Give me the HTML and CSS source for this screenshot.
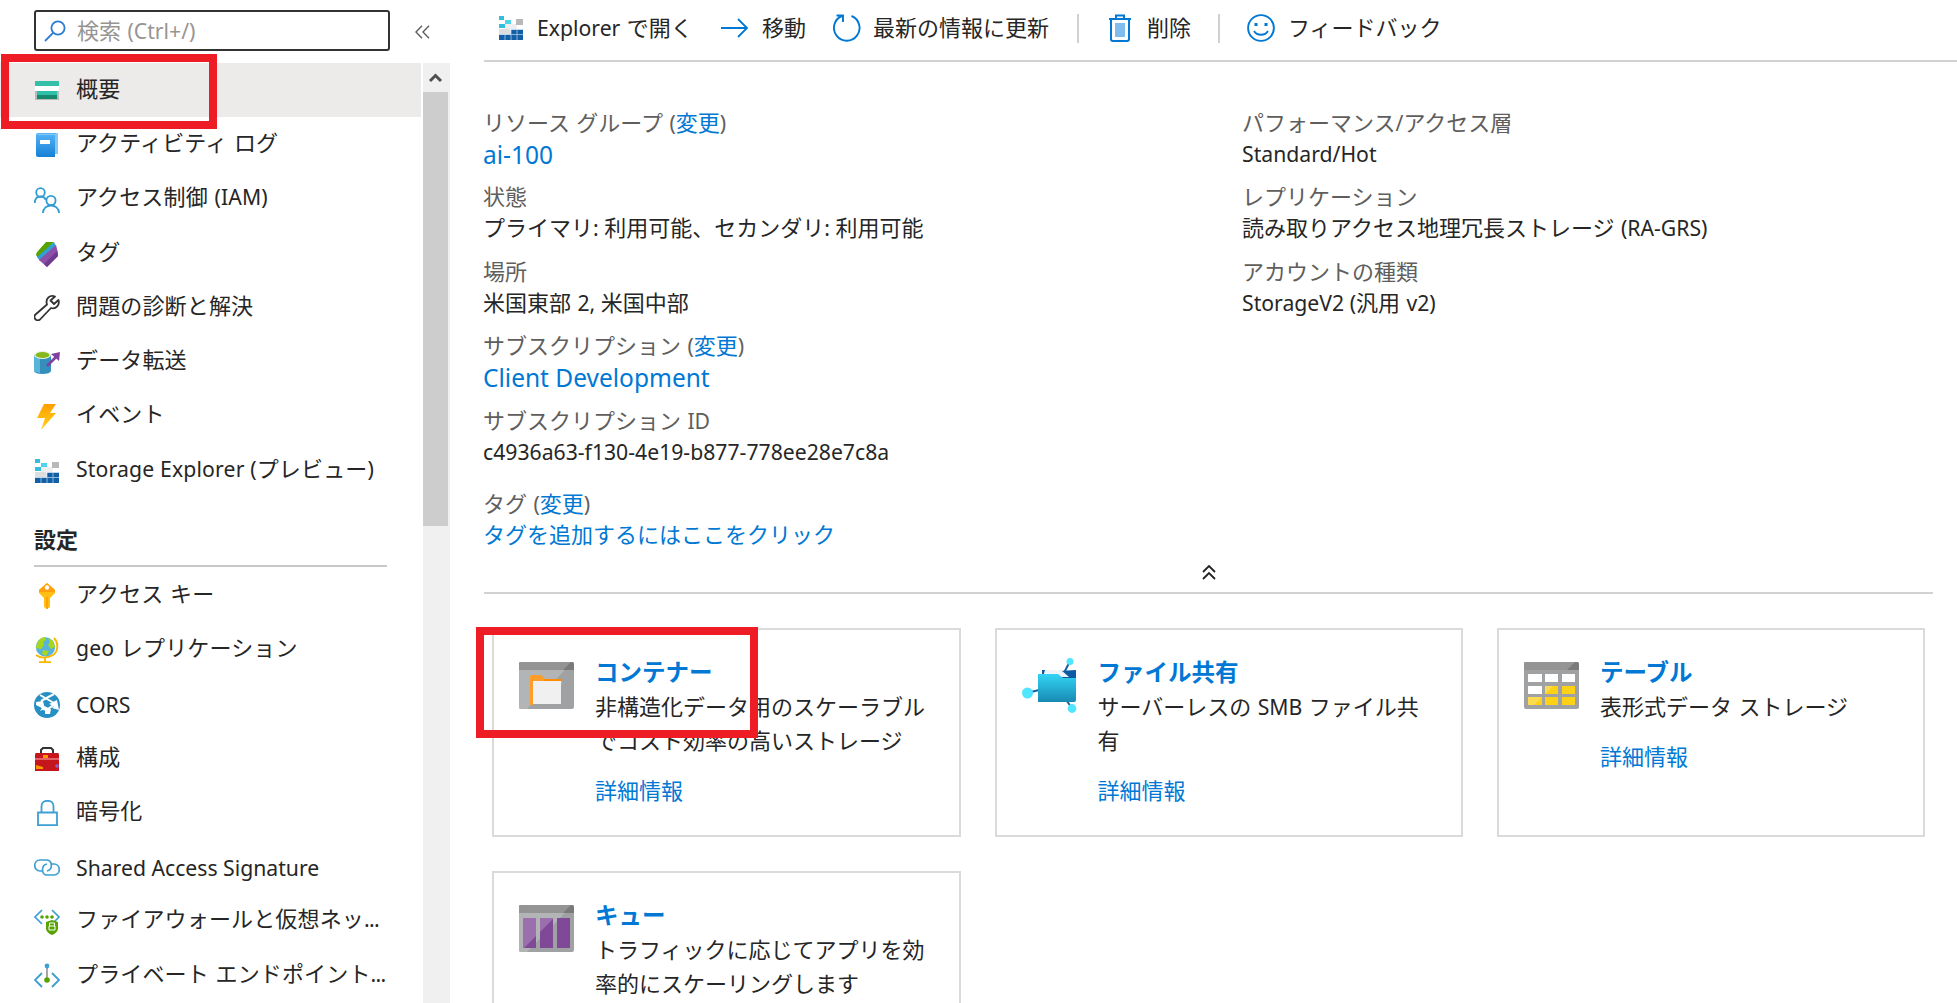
FILE: index.html
```html
<!DOCTYPE html>
<html lang="ja">
<head>
<meta charset="utf-8">
<title>ストレージ アカウント</title>
<link rel="stylesheet" href="styles.css">
</head>
<body>
<svg width="0" height="0" class="defs">
  <defs>
    <symbol id="explorer" viewBox="0 0 24 24">
      <path d="M6 4h6v4h6v5H6z" fill="#f0f0f0"/>
      <path d="M0 0h5v4H0zM0 8h6v4H0z" fill="#32bedd"/><path d="M6 4h6v4H6z" fill="#50d4ee"/>
      <path d="M17 3h7v6h-7z" fill="#b8b8b8"/><path d="M6 9h5v4H6zM12 9h5v4h-5z" fill="#eee"/>
      <path d="M0 13h11v5H0z" fill="#dedede"/><path d="M12 14h12v10H0v-5h12z" fill="#135fa5"/>
      <path d="M0 18.5h24M12 13.5h12M6 19v5M12 14v10M18 14v10" stroke="#a9cbea" stroke-width=".8"/>
    </symbol>
    <linearGradient id="book" x2="0" y2="1"><stop stop-color="#55b4f8"/><stop offset="1" stop-color="#1580d5"/></linearGradient>
    <linearGradient id="folder" x2="0" y2="1"><stop stop-color="#32d4f5"/><stop offset="1" stop-color="#198ab3"/></linearGradient>
    <linearGradient id="bolt" x2="0" y2="1"><stop stop-color="#ff9f00"/><stop offset="1" stop-color="#ffd21c"/></linearGradient>
  </defs>
</svg>
<div class="app">
  <aside class="side">
    <div class="search-row">
      <div class="search">
        <svg width="22" height="22" viewBox="0 0 22 22" fill="none" stroke="#2b7cd3" stroke-width="1.8"><circle cx="14" cy="8" r="6.6"/><path d="M9.3 12.7L1 21"/></svg>
        <span>検索 <span class="en">(Ctrl+/)</span></span>
      </div>
      <svg class="collapse" width="15" height="14" viewBox="0 0 15 14" fill="none" stroke="#605e5c" stroke-width="1.4"><path d="M7 .7L1 7l6 6.3M14 .7L8 7l6 6.3"/></svg>
    </div>
    <div class="side-body">
      <nav class="menu">
        <div class="item active"><svg width="26" height="26" viewBox="0 0 26 26"><path d="M1 7h24v13H1z" fill="#e4e4e4"/><path d="M1 3h24v5H1z" fill="#35bfa9"/><path d="M1 8h24v5H1z" fill="#fff"/><path d="M1 13h24v9H1z" fill="#b8bab9"/><path d="M3 13h20v4H3z" fill="#2fc0a9"/><path d="M3 17h20v4H3z" fill="#15896f"/></svg><span>概要</span></div>
        <div class="item"><svg width="26" height="26" viewBox="0 0 26 26"><path d="M4 1h19q1 0 1 1v20H4z" fill="#83c8f6"/><path d="M4 3h17v22H4q-2 0-2-2V3q0-2 2-2h18v1H4z" fill="url(#book)"/><path d="M6 8h10v4H6z" fill="#fff"/></svg><span>アクティビティ ログ</span></div>
        <div class="item"><svg width="26" height="26" viewBox="0 0 26 26" fill="none" stroke="#309cd3" stroke-width="1.8"><circle cx="6.5" cy="5.5" r="4.3"/><path d="M.8 16c0-8 9-8 11-3"/><circle cx="17" cy="13.500" r="4.6"/><path d="M9 26c0-10 16-10 16 0"/></svg><span>アクセス制御 <span class="en">(IAM)</span></span></div>
        <div class="item"><svg width="26" height="26" viewBox="0 0 26 26"><path d="M12 1h8L4 17l-2-3q0-2 2-4z" fill="#57a300"/><path d="M20 1l2 4L6 20l-3-4z" fill="#32a0d0"/><path d="M22 4l2 8v3L13 26 5 19z" fill="#8e4fa9"/><path d="M24 15L13 26l-3-3 13-13z" fill="#6f3b91"/></svg><span>タグ</span></div>
        <div class="item"><svg width="26" height="26" viewBox="0 0 26 26" fill="none" stroke="#333" stroke-width="1.8" stroke-linejoin="round"><path d="M21 1.500c-5-2-10 2-8 8L1.500 19.500c-3 3 1 7.500 4.500 5L17 13c5 1.500 9-3 7.500-8l-4.500 4-3.500-3.500z"/></svg><span>問題の診断と解決</span></div>
        <div class="item"><svg width="26" height="26" viewBox="0 0 26 26"><path d="M0 5h17v16q-1 3-8.500 3T0 21z" fill="#348fbd"/><path d="M0 6h6v17q-6-1-6-2z" fill="#59b4d9"/><ellipse cx="8.500" cy="5" rx="8.500" ry="4" fill="#e5f0e0"/><ellipse cx="8.500" cy="5" rx="7" ry="3" fill="#86b81b"/><path d="M13 16l9-9" stroke="#8040a0" stroke-width="2.600"/><path d="M17 4l9-2-1 9z" fill="#8040a0"/></svg><span>データ転送</span></div>
        <div class="item"><svg width="26" height="26" viewBox="0 0 26 26"><path d="M10 0h12l-6 9h6L7 26l4-12H3z" fill="url(#bolt)"/></svg><span>イベント</span></div>
        <div class="item"><svg width="26" height="26" viewBox="-1 -1 26 26"><use href="#explorer" width="24" height="24"/></svg><span><span class="en">Storage Explorer (</span>プレビュー<span class="en">)</span></span></div>
        <h2 class="group">設定</h2>
        <div class="item"><svg width="26" height="26" viewBox="0 0 26 26"><path d="M13 0l8 7v3l-5 5v9l-3 2-3-2v-9L5 10V7z" fill="#ffbe12"/><path d="M13 0L5 7v2h16V7z" fill="#ff9f0f"/><circle cx="13" cy="4.500" r="2.200" fill="#fff"/><path d="M13 14v12" stroke="#ff9b00" stroke-width="1.500"/></svg><span>アクセス キー</span></div>
        <div class="item"><svg width="26" height="26" viewBox="0 0 26 26"><circle cx="11.500" cy="10" r="9.700" fill="#59b4d9"/><path d="M3 6q3-6 8-6l1 3-3 2 1 3-3 4-5-1zM14 1l5 3 2 6-4 2-3-4 2-3zM9 13l6 1-3 5-4-2z" fill="#a6d61e"/><path d="M20 1c5 5 4 14-1 17s-12 4-17 0M11 21v4M5 25.300h12" fill="none" stroke="#fab700" stroke-width="1.900"/></svg><span><span class="en">geo</span> レプリケーション</span></div>
        <div class="item"><svg width="26" height="26" viewBox="0 0 26 26"><circle cx="13" cy="13" r="13" fill="#268fc4"/><path d="M6 3l14 8M20 2L7 9M4 11l7 7M22 11l-8 6-4-2" stroke="#fff" stroke-width="2" fill="none"/><path d="M2 10l7-1 2 8-5 2 2-3-6-3zM23 8l2 10-7-2 2-2-5-2zM11 17h6l-1 5h-5z" fill="#fff"/></svg><span class="en low">CORS</span></div>
        <div class="item"><svg width="26" height="26" viewBox="0 0 26 26"><path d="M7 8V4l2-2h8l2 2v4" stroke="#333" stroke-width="2" fill="none"/><path d="M2 7h22q1 0 1 2v16H1V9q0-2 1-2z" fill="#c4161c"/><path d="M1 13h24" stroke="#f07880" stroke-width="1.500"/><path d="M9 9h5v3H9zM2 19l7 2v2H2z" fill="#ff9500"/><circle cx="23" cy="20" r="1.800" fill="#8e62d5"/></svg><span>構成</span></div>
        <div class="item"><svg width="26" height="26" viewBox="0 0 26 26" fill="none" stroke="#3d9fd3" stroke-width="1.800"><path d="M4 12.500h19v12.600H4zM7.500 12V6c0-7 12-7 12 0v6"/></svg><span>暗号化</span></div>
        <div class="item"><svg width="26" height="26" viewBox="0 0 26 26" fill="none" stroke="#3d9fd3" stroke-width="1.700"><path d="M8 16H6C-1 16-1 5 6 5h6c7 0 7 10 1 11"/><path d="M17 9h3c7 0 7 11 0 11h-7c-6 0-6-10 0-11"/></svg><span class="en low">Shared Access Signature</span></div>
        <div class="item"><svg width="26" height="26" viewBox="0 0 26 26" fill="none"><path d="M8 1L1 8l7 7M18 1l7 7-5 5" stroke="#3d9fd3" stroke-width="1.700"/><g fill="#57a300"><circle cx="8" cy="8" r="1.800"/><circle cx="13" cy="8" r="1.800"/><circle cx="18" cy="8" r="1.800"/><path d="M12 13l6-2 6 2v7q-1 4-6 6-5-2-6-6z"/></g><path d="M15.500 17v-3h5v3M15 17h6v4h-6z" stroke="#fff" stroke-width="1"/></svg><span>ファイアウォールと仮想ネッ<span class="en dots">...</span></span></div>
        <div class="item"><svg width="26" height="26" viewBox="0 0 26 26" fill="none"><path d="M8 10l-7 7 7 7M18 10l7 7-7 7" stroke="#3d9fd3" stroke-width="1.900"/><path d="M13 3v14" stroke="#777" stroke-width="1.300"/><circle cx="13" cy="3" r="2.400" fill="#3d9fd3"/><circle cx="13" cy="17" r="2.800" fill="#57a300"/></svg><span>プライベート エンドポイント<span class="en dots">...</span></span></div>
      </nav>
      <div class="scrollbar">
        <svg width="26" height="29" viewBox="0 0 26 29"><path d="M7 18l5.500-5.500L18 18" fill="none" stroke="#505050" stroke-width="3"/></svg>
        <div class="thumb"></div>
      </div>
    </div>
    <div class="mark mark-menu"></div>
  </aside>

  <main class="main">
    <div class="toolbar">
      <div class="cmd c1"><svg width="24" height="24"><use href="#explorer" width="24" height="24"/></svg><span><span class="en">Explorer</span> で開く</span></div>
      <div class="cmd c2"><svg width="28" height="20" viewBox="0 0 28 20" fill="none" stroke="#0078d4" stroke-width="1.800"><path d="M0 10h26M17 1l9 9-9 9"/></svg><span>移動</span></div>
      <div class="cmd c3"><svg width="28" height="28" viewBox="0 0 28 28" fill="none" stroke="#0078d4" stroke-width="1.900"><path d="M18.500 2A12.800 12.800 0 1 1 9 2M3.500 1.500H10v6.500"/></svg><span>最新の情報に更新</span></div>
      <div class="cmd c4"><svg width="22" height="28" viewBox="0 0 22 28" fill="none" stroke="#0078d4" stroke-width="2"><path d="M0 5h22M7 4V1.500h8V4M2 5v20q0 2 2 2h14q2 0 2-2V5"/><path d="M6 9h10v14H6z" fill="#80bcec" stroke="none"/></svg><span>削除</span></div>
      <div class="cmd c5"><svg width="28" height="28" viewBox="0 0 28 28" fill="none" stroke="#0078d4" stroke-width="1.900"><circle cx="14" cy="14" r="12.900"/><path d="M7 17c3 5 11 5 14 0"/><path d="M7.500 10.500h3M17.500 10.500h3" stroke-width="3"/></svg><span>フィードバック</span></div>
    </div>

    <section class="details">
      <dl class="col">
        <div class="prop"><dt>リソース グループ <span class="en">(</span><a>変更</a><span class="en">)</span></dt><dd class="big"><a>ai-100</a></dd></div>
        <div class="prop"><dt>状態</dt><dd>プライマリ<span class="en">: </span>利用可能、セカンダリ<span class="en">: </span>利用可能</dd></div>
        <div class="prop"><dt>場所</dt><dd>米国東部 <span class="en">2, </span>米国中部</dd></div>
        <div class="prop"><dt>サブスクリプション <span class="en">(</span><a>変更</a><span class="en">)</span></dt><dd class="big"><a>Client Development</a></dd></div>
        <div class="prop"><dt>サブスクリプション <span class="en">ID</span></dt><dd><span class="en">c4936a63-f130-4e19-b877-778ee28e7c8a</span></dd></div>
        <div class="prop tags"><dt>タグ <span class="en">(</span><a>変更</a><span class="en">)</span></dt><dd><a>タグを追加するにはここをクリック</a></dd></div>
      </dl>
      <dl class="col">
        <div class="prop"><dt>パフォーマンス<span class="en">/</span>アクセス層</dt><dd><span class="en">Standard/Hot</span></dd></div>
        <div class="prop"><dt>レプリケーション</dt><dd>読み取りアクセス地理冗長ストレージ <span class="en">(RA-GRS)</span></dd></div>
        <div class="prop"><dt>アカウントの種類</dt><dd><span class="en">StorageV2 (</span>汎用 <span class="en">v2)</span></dd></div>
      </dl>
    </section>
    <div class="fold"><svg width="14" height="15" viewBox="0 0 14 15" fill="none" stroke="#222" stroke-width="1.800"><path d="M1 7l6-6 6 6M1 14l6-6 6 6"/></svg></div>

    <section class="cards">
      <article class="card">
        <svg width="55" height="55" viewBox="0 0 55 55"><rect y="4" width="55" height="47" rx="2" fill="#a0a1a2"/><path d="M0 12h46L8 51H2q-2 0-2-2z" fill="#b3b4b5"/><path d="M0 12V6q0-2 2-2h51q2 0 2 2v6z" fill="#7a7a7a"/><path d="M0 12V6q0-2 2-2h50l-8 8z" fill="#949494"/><path d="M11 47V19q0-2 2-2h9l4 4h15q2 0 2 2v4H14v20z" fill="#ff9d2b"/><path d="M14 23h28v23H14z" fill="#f0f0f0"/><path d="M26 21h17v2H24z" fill="#ff8c00"/></svg>
        <div class="text"><h3>コンテナー</h3><p>非構造化データ用のスケーラブル<br>でコスト効率の高いストレージ</p><a>詳細情報</a></div>
        <div class="mark mark-card"></div>
      </article>
      <article class="card">
        <svg width="55" height="55" viewBox="0 0 55 55"><path d="M5 35l12-3M42 15l6-12M44 42l6 8" stroke="#1560a0" stroke-width="2"/><path d="M20 12h14l3 1 17-1v12H20z" fill="#0c5aa5"/><path d="M23 12h16l8 7H21z" fill="#eef4fa"/><path d="M16 16h20l5 4h13v22q0 2-2 2H16z" fill="url(#folder)"/><g fill="#50e6ff"><circle cx="5.500" cy="35" r="5.500"/><circle cx="48" cy="3.500" r="3.500"/><circle cx="50" cy="50.500" r="4.400"/></g></svg>
        <div class="text"><h3>ファイル共有</h3><p>サーバーレスの <span class="en">SMB</span> ファイル共<br>有</p><a>詳細情報</a></div>
      </article>
      <article class="card">
        <svg width="55" height="55" viewBox="0 0 55 55"><rect y="4" width="55" height="47" rx="2" fill="#a0a1a2"/><path d="M0 12V6q0-2 2-2h51q2 0 2 2v6z" fill="#7a7a7a"/><path d="M0 12V6q0-2 2-2h49l-8 8z" fill="#949494"/><path d="M4 16h14v8H4zM21 16h13v8H21zM38 16h13v8H38zM4 28h14v8H4z" fill="#fff"/><path d="M21 28h13v8H21zM38 28h13v8H38zM4 39h14v8H4zM21 39h13v8H21zM38 39h13v8H38z" fill="#fcd116"/><path d="M21 28h8l-8 8zM4 39h14l-8 8H4z" fill="#fddb50"/></svg>
        <div class="text"><h3>テーブル</h3><p>表形式データ ストレージ</p><a>詳細情報</a></div>
      </article>
      <article class="card">
        <svg width="55" height="55" viewBox="0 0 55 55"><rect y="4" width="55" height="47" rx="2" fill="#a0a1a2"/><path d="M0 12h46L8 51H2q-2 0-2-2z" fill="#b3b4b5"/><path d="M0 12V6q0-2 2-2h51q2 0 2 2v6z" fill="#7a7a7a"/><path d="M0 12V6q0-2 2-2h50l-8 8z" fill="#949494"/><path d="M4 17h13v30H4zM21 17h13v30H21zM38 17h13v30H38z" fill="#804998"/><path d="M4 17h13v18L5 47H4zM21 17h13v1L21 31z" fill="#9b6fae"/></svg>
        <div class="text"><h3>キュー</h3><p>トラフィックに応じてアプリを効<br>率的にスケーリングします</p></div>
      </article>
    </section>
  </main>
</div>
</body>
</html>
```
FILE: styles.css
```css
* { box-sizing: border-box; }
body {
  margin: 0;
  background: #fff;
  color: #262626;
  font: 22px/31px "Noto Sans CJK JP", sans-serif;
  word-spacing: 1.5px;
  overflow: hidden;
}
.defs { position: absolute; }
h2, h3, p, dl, dd, dt { margin: 0; font-weight: 400; }
a { color: #0078d4; }
svg { display: block; flex: none; }
.en {
  font-family: "Noto Sans", sans-serif;
  font-size: 21.200px;
  line-height: 1;
  word-spacing: 0;
}

.app { display: flex; height: 1003px; overflow: hidden; white-space: nowrap; }

/* side menu */
.side {
  position: relative;
  flex: none;
  width: 450px;
  display: flex;
  flex-direction: column;
}
.search-row {
  display: flex;
  align-items: center;
  gap: 25px;
  height: 63px;
  padding: 0 0 2px 34px;
}
.search {
  display: flex;
  align-items: center;
  gap: 11px;
  width: 356px;
  height: 41px;
  padding-left: 8px;
  border: 2px solid #333;
  border-radius: 3px;
  color: #979593;
}
.search > span { padding-bottom: 3px; }
.collapse { margin-top: 2px; }
.side-body { display: flex; flex: 1; min-height: 0; }
.menu { width: 421px; overflow: hidden; }
.item {
  display: flex;
  align-items: center;
  gap: 16px;
  height: 54.300px;
  padding-left: 34px;
}
.item > svg { margin-top: 2px; }
.item > span { padding-bottom: 6px; letter-spacing: .150px; }
.item > .en { padding: 2px 0 0; letter-spacing: 0; }
.item .dots { letter-spacing: -.700px; }
.item.active { background: #edebe9; }
.group {
  height: 70px;
  margin: 0 34px .600px;
  padding-top: 26px;
  width: 353px;
  border-bottom: 2px solid #c8c8c8;
  font-size: 22px;
  font-weight: 700;
}
.scrollbar { width: 27px; margin-left: 2px; background: #f0f0f0; }
.thumb { width: 25px; height: 434px; background: #cdcdcd; }

/* highlight frames */
.mark { position: absolute; border: 8px solid #ee1c25; }
.mark-menu { left: 1px; top: 54px; width: 216px; height: 75px; }
.mark-card { left: -18px; top: -3px; width: 282px; height: 111px; }

/* content */
.main { flex: 1; min-width: 0; padding-left: 34px; overflow: hidden; }
.toolbar {
  display: flex;
  align-items: center;
  height: 62px;
  padding: 0 0 4px 15px;
  border-bottom: 2px solid #d2d2d2;
}
.cmd { display: flex; align-items: center; height: 29px; }
.cmd > span { padding-bottom: 4px; }
.c1 { gap: 14px; width: 222px; }
.c2 { gap: 13px; width: 112px; }
.c3 { gap: 12px; width: 246px; border-right: 2px solid #d0d0d0; }
.c4 { gap: 16px; width: 141px; padding-left: 30px; border-right: 2px solid #d0d0d0; }
.c5 { gap: 13px; padding-left: 27px; }

.details {
  display: grid;
  grid-template-columns: 759px 1fr;
  height: 500px;
  padding-top: 43.500px;
}
.col { margin-left: -1px; }
.prop { height: 74.600px; }
.prop.tags { margin-top: 8.500px; }
dt { color: #605e5c; }
.big { font: 24.500px/36px "Noto Sans", sans-serif; word-spacing: 0; }
.fold {
  display: flex;
  justify-content: center;
  width: 1449px;
  height: 32px;
  padding-top: 3px;
  border-bottom: 2px solid #d2d2d2;
}
.cards {
  display: grid;
  grid-template-columns: 468.500px 468.500px 428px;
  grid-auto-rows: 209px;
  gap: 34px;
  padding: 34px 0 0 8px;
  height: 409px;
}
.card {
  position: relative;
  display: flex;
  gap: 22px;
  padding: 28px 0 0 25px;
  border: 2px solid #dadada;
}
.text { margin: -4px 0 0 -1px; }
.card h3 { color: #0078d4; font-size: 23.500px; line-height: 34px; font-weight: 700; }
.card p { line-height: 34px; }
.text > a { display: block; margin-top: 18px; }
```
